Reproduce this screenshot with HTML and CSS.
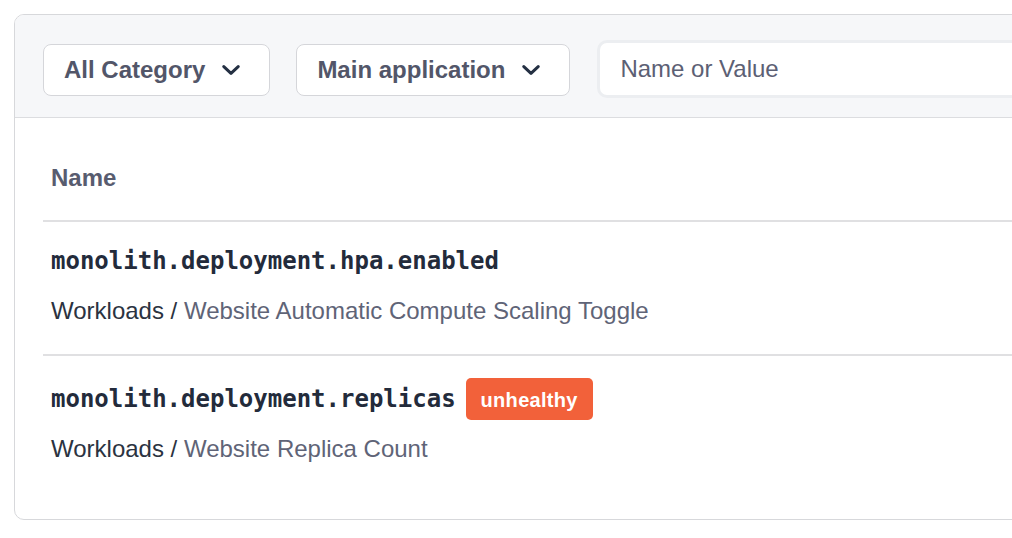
FILE: index.html
```html
<!DOCTYPE html>
<html lang="en">
<head>
<meta charset="utf-8">
<title>Values</title>
<link rel="stylesheet" href="styles.css">
</head>
<body>
<div class="card">
  <div class="toolbar">
    <button class="select" type="button">
      <span>All Category</span>
      <svg class="chev" width="18" height="10" viewBox="0 0 18 10"><path d="M1.8 1.6 L9 8.4 L16.2 1.6"/></svg>
    </button>
    <button class="select" type="button">
      <span>Main application</span>
      <svg class="chev" width="18" height="10" viewBox="0 0 18 10"><path d="M1.8 1.6 L9 8.4 L16.2 1.6"/></svg>
    </button>
    <input class="search" type="text" placeholder="Name or Value">
  </div>
  <div class="table">
    <div class="thead">Name</div>
    <div class="row">
      <div class="key">monolith.deployment.hpa.enabled</div>
      <div class="desc"><span class="cat">Workloads /</span> Website Automatic Compute Scaling Toggle</div>
    </div>
    <div class="row">
      <div class="key">monolith.deployment.replicas<span class="badge">unhealthy</span></div>
      <div class="desc"><span class="cat">Workloads /</span> Website Replica Count</div>
    </div>
  </div>
</div>
</body>
</html>
```
FILE: styles.css
```css
html, body {
  margin: 0;
  padding: 0;
  background: #ffffff;
  overflow: hidden;
}

body {
  font-family: "Liberation Sans", Arial, sans-serif;
  font-size: 24px;
}

.card {
  margin: 14px 0 0 14px;
  width: 1100px;
  border: 1px solid #d7d8db;
  border-radius: 10px;
  overflow: hidden;
  background: #ffffff;
}

.toolbar {
  display: flex;
  align-items: center;
  gap: 26px;
  padding: 29px 0 21px 28px;
  background: #f6f7f9;
  border-bottom: 1px solid #dcdde0;
}

.select {
  flex: none;
  display: inline-flex;
  align-items: center;
  white-space: nowrap;
  height: 52px;
  box-sizing: border-box;
  padding: 0 29px 0 20px;
  border: 1px solid #d5d6da;
  border-radius: 8px;
  background: #ffffff;
  font-family: "Liberation Sans", Arial, sans-serif;
  font-size: 24px;
  font-weight: 700;
  color: #525669;
  line-height: 28px;
}

.chev {
  flex: none;
  margin-left: 17px;
  fill: none;
  stroke: #243043;
  stroke-width: 3;
  stroke-linecap: round;
  stroke-linejoin: round;
}

.search {
  flex: none;
  width: 600px;
  height: 58px;
  box-sizing: border-box;
  margin: -4px 0 -2px 1px;
  border: 3px solid #eceef1;
  border-radius: 10px;
  padding: 0 20px;
  background: #ffffff;
  font-family: "Liberation Sans", Arial, sans-serif;
  font-size: 24px;
  color: #2b3341;
  outline: none;
}

.search::placeholder {
  color: #5c6074;
  opacity: 1;
}

.table {
  padding: 0 0 27px 28px;
}

.thead {
  padding: 46px 0 28px 8px;
  line-height: 28px;
  font-weight: 700;
  color: #585c6f;
  border-bottom: 2px solid #e0e0e2;
}

.row {
  padding: 22px 0 29px 8px;
  border-bottom: 2px solid #e0e0e2;
}

.row:last-child {
  border-bottom: none;
}

.key {
  font-family: "DejaVu Sans Mono", monospace;
  font-weight: 700;
  font-size: 24px;
  line-height: 35px;
  color: #232b3b;
}

.badge {
  display: inline-block;
  vertical-align: baseline;
  margin-left: 10px;
  margin-bottom: -7px;
  padding: 11px 15px 8px;
  border-radius: 5px;
  background: #f2613a;
  color: #ffffff;
  font-family: "Liberation Sans", Arial, sans-serif;
  font-size: 20px;
  font-weight: 700;
  line-height: 23px;
  letter-spacing: 0.3px;
}

.desc {
  margin-top: 18px;
  line-height: 28px;
  color: #5f6477;
}

.cat {
  color: #2b3341;
}
```
